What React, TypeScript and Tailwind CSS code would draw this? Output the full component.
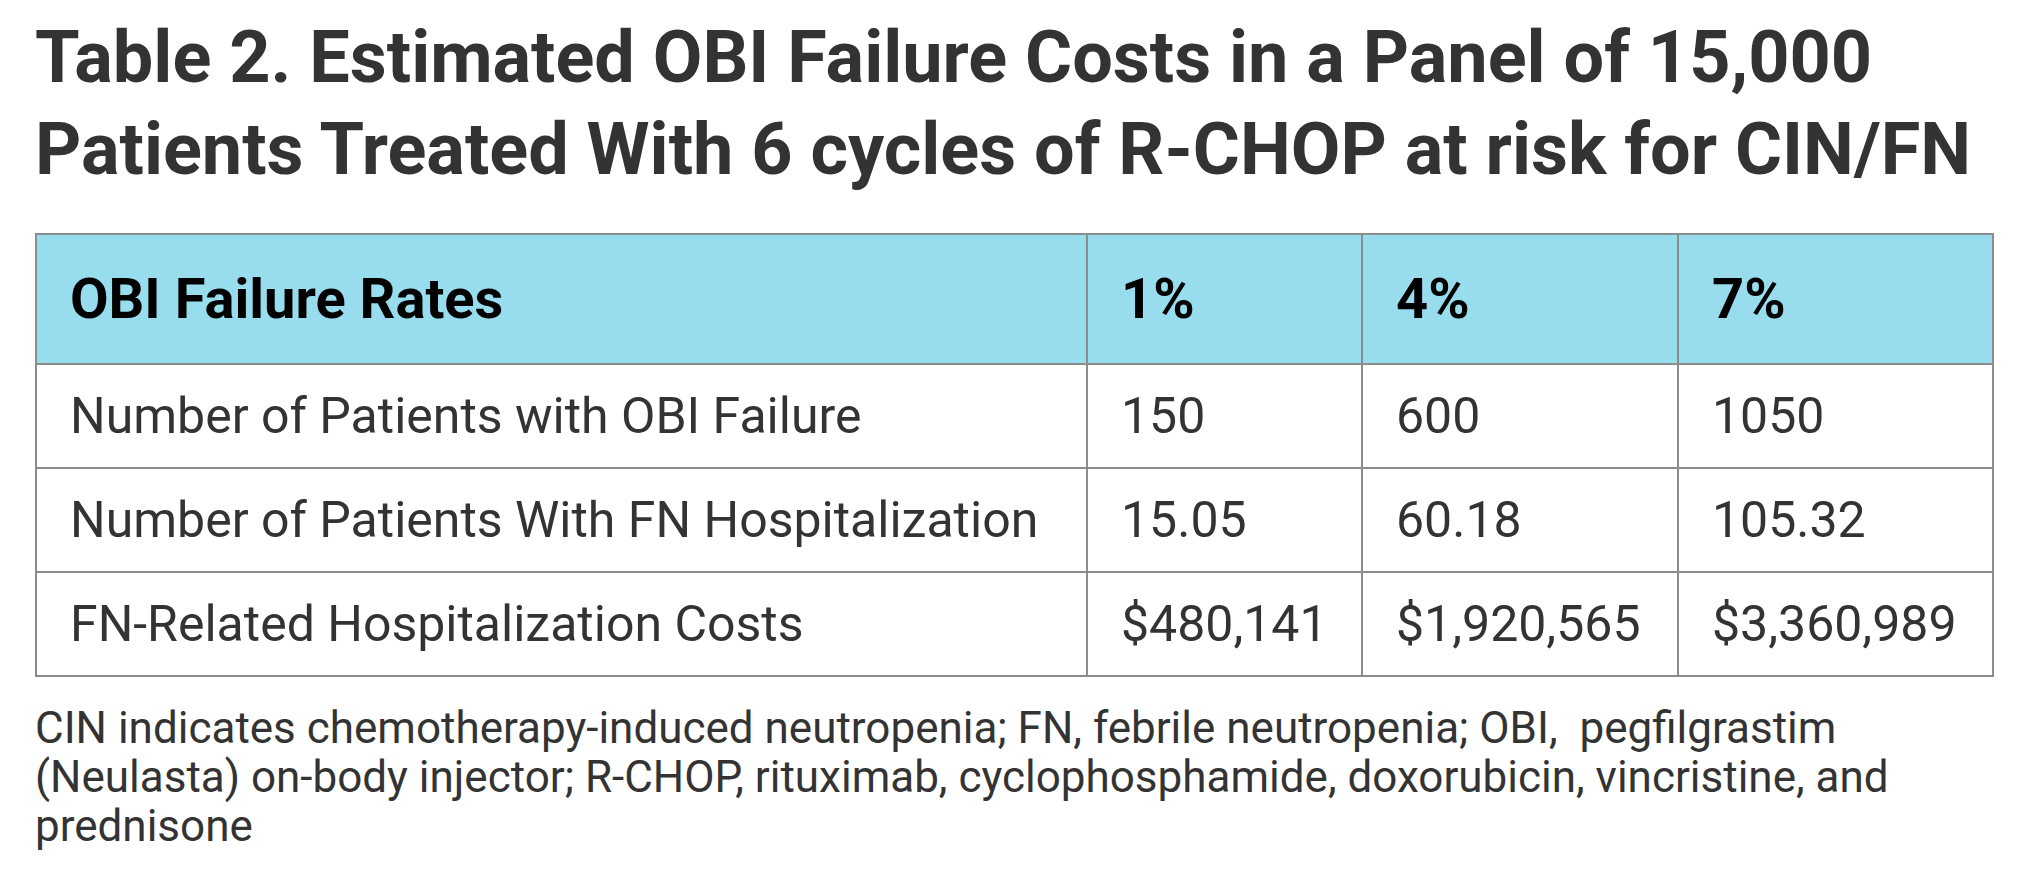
const header = ["OBI Failure Rates", "1%", "4%", "7%"];

const rows = [
  ["Number of Patients with OBI Failure", "150", "600", "1050"],
  ["Number of Patients With FN Hospitalization", "15.05", "60.18", "105.32"],
  ["FN-Related Hospitalization Costs", "$480,141", "$1,920,565", "$3,360,989"],
];

const colWidths = ["w-[1051px]", "w-[275px]", "w-[316px]", "w-[315px]"];

export default function App() {
  return (
    <div className="min-h-screen bg-white pl-[35px] pr-[38px] pt-[12px] font-['Roboto',sans-serif]">
      <h1 className="text-[72px] font-bold leading-[92px] text-[#333333]">
        Table 2. Estimated OBI Failure Costs in a Panel of 15,000 Patients Treated With 6 cycles of R-CHOP at risk for CIN/FN
      </h1>

      <table className="mt-[37px] w-[1958px] table-fixed border-collapse border-2 border-[#8c8c8c]">
        <thead>
          <tr className="h-[130px] bg-[#97dded]">
            {header.map((h, i) => (
              <th
                key={h}
                className={`${colWidths[i]} border-2 border-[#8c8c8c] px-[33px] text-left text-[56px] font-bold text-black`}
              >
                {h}
              </th>
            ))}
          </tr>
        </thead>
        <tbody>
          {rows.map((r) => (
            <tr key={r[0]} className="h-[104px]">
              {r.map((c, i) => (
                <td
                  key={i}
                  className="border-2 border-[#8c8c8c] px-[33px] text-left text-[50px] font-normal text-[#333333] whitespace-nowrap"
                >
                  {c}
                </td>
              ))}
            </tr>
          ))}
        </tbody>
      </table>

      <p className="mt-[27px] text-[44px] leading-[49px] text-[#333333]">
        CIN indicates chemotherapy-induced neutropenia; FN, febrile neutropenia; OBI,{"\u00a0"} pegfilgrastim (Neulasta) on-body injector; R-CHOP, rituximab, cyclophosphamide, doxorubicin, vincristine, and prednisone
      </p>
    </div>
  );
}
